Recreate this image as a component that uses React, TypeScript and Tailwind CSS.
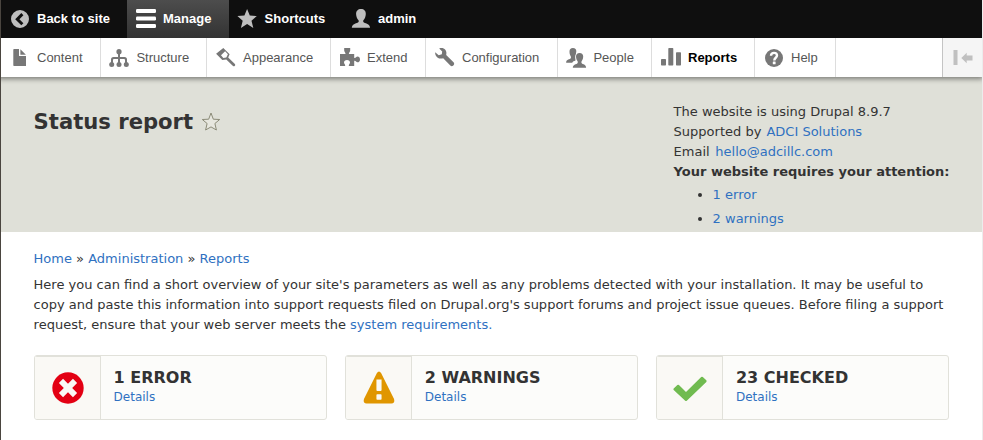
import type { ReactNode } from "react";

function Icon({ children, size = "size-5" }: { children: ReactNode; size?: string }) {
  return (
    <svg viewBox="0 0 20 20" fill="currentColor" className={`${size} shrink-0 overflow-visible`} aria-hidden="true">
      {children}
    </svg>
  );
}

const icons = {
  back: (
    <path
      fillRule="evenodd"
      d="M10 1a9 9 0 1 0 0 18a9 9 0 0 0 0-18ZM11.3 4.100L13.4 6.200L9.4 10.2L13.4 14.2L11.3 16.300L5.200 10.2Z"
    />
  ),
  menu: (
    <g>
      <rect x="0" y="0" width="20" height="4" rx="1.2" />
      <rect x="0" y="7.5" width="20" height="4" rx="1.2" />
      <rect x="0" y="15" width="20" height="4" rx="1.2" />
    </g>
  ),
  star: <path d="M9.1 0L11.8 6.6L18.8 7.1L13.5 11.8L15.3 18.9L9.1 15.1L2.9 18.9L4.7 11.8L-.6 7.1L6.4 6.6Z" />,
  person: (
    <path d="M10 0c3 0 5 2 4.8 5.1c-.1 2.6-.9 4.8-2.4 6.2c-.4.5-.3 1.8.5 2.2c2.7 1.3 5.8 1.6 6.2 5.2H.8c.4-3.6 3.500-3.900 6.200-5.200c.9-.4.9-1.700.500-2.200c-1.500-1.400-2.300-3.600-2.400-6.200C5 2 7 0 10 0Z" />
  ),
  file: (
    <g>
      <path d="M4 1H9V8H16V18H4Q3.300 18 3.300 17.300V1.700Q3.300 1 4 1Z" />
      <path d="M10.400 1.200L15.900 6.700H10.400Z" />
    </g>
  ),
  structure: (
    <g>
      <circle cx="10" cy="3.700" r="2.600" />
      <path d="M9 5h2v4h4.500q2.500 0 2.500 2.500V15h-2v-3q0-1-1-1h-4v4h-2v-4H5q-1 0-1 1v3H2v-3.500Q2 9 4.500 9H9Z" />
      <circle cx="2.700" cy="16.500" r="2.500" />
      <circle cx="10" cy="16.500" r="2.500" />
      <circle cx="17.300" cy="16.500" r="2.500" />
    </g>
  ),
  paint: (
    <path
      fillRule="evenodd"
      d="M7.300.1L13.600 6.300L12.200 9.500L18.900 15.900Q19.700 16.800 18.900 17.700Q17.900 18.700 17 17.900L10.300 11.400L6.300 12L.1 5.800ZM9.100 3.200L5 7.200L7.300 10.100L10.300 9.600L11.900 6.200Z"
    />
  ),
  puzzle: (
    <path d="M0 6H5.400C6 4.700 4.200 3.900 4.200 2.400V.1H10.200V2.400C10.200 3.900 8.300 4.800 9 6H14.200V9.700C15.400 10.700 16.100 8.500 17.500 8.500C19 8.500 20 9.700 20 11.400C20 13.100 19 14.300 17.500 14.300C16.100 14.300 15.400 12.100 14.200 13.100V18H8.900C8.300 16.800 10 16 10 14.500C10 13.100 8.900 12 7 12S4 13.100 4 14.500C4 16 5.700 16.800 5.100 18H0Z" />
  ),
  wrench: (
    <path d="M.2 4.200L3.700 7.300L6.800 6.300L7.200 3.500L4.200.4C6.500-.4 9 0 10.300 1.800C11.500 3.400 11.600 5.200 11.200 6.900L18.500 14.300C20.500 16.300 17.500 19.600 15.300 17.600L8.200 10.200C6.200 10.900 4 10.600 2.400 9.400C.6 8 0 6.200.2 4.200Z" />
  ),
  people: (
    <g>
      <path d="M6.900.1C9.300.1 10.400 1.600 10.300 3.600L9.300 9.500L9.500 12.500C8 13 6.700 13.500 6.200 14.700H.1C.2 12.200 1.500 12 3.800 11.100C5.200 10.400 5.200 9.200 4.700 8.200C3.800 6.900 3.500 5.400 3.500 3.600C3.500 1.600 4.600.1 6.900.1Z" />
      <path d="M13.600 4.900C15.900 4.900 17.300 6.300 17.200 8.600C17.100 10.700 16.500 12.100 15.600 13.300C15.200 14.300 15.500 15.300 16.200 15.700C18 16.600 20 16.600 20.100 19.800H6.800C7 16.600 9.200 16.600 11 15.700C11.700 15.300 12 14.300 11.600 13.300C10.700 12.100 10.100 10.700 10 8.600C9.900 6.300 11.300 4.900 13.600 4.900Z" stroke="white" strokeWidth="1.2" paintOrder="stroke" />
    </g>
  ),
  reports: (
    <g>
      <rect x="0" y="11" width="5" height="6.500" rx=".7" />
      <rect x="7.300" y="0" width="5" height="17.500" rx=".7" />
      <rect x="15" y="4.200" width="5" height="13.300" rx=".7" />
    </g>
  ),
  help: (
    <g>
      <circle cx="10" cy="10" r="9" />
      <path d="M7 7.800C7 5.800 8.200 4.900 10 4.900S13 5.900 13 7.500C13 9.800 10.300 9.700 10.300 12.400" fill="none" stroke="white" strokeWidth="2.400" />
      <rect x="8.800" y="13.500" width="2.800" height="2.700" rx=".5" fill="white" />
    </g>
  ),
};

const topItems = [
  { label: "Back to site", icon: icons.back, cls: "w-[126px] text-[#bebebe]" },
  { label: "Manage", icon: icons.menu, cls: "w-[102px] bg-linear-to-b from-[#4d4d4d] to-[#333333] text-white" },
  { label: "Shortcuts", icon: icons.star, cls: "w-[113.4px] -ml-[0.4px] text-[#bebebe]" },
  { label: "admin", icon: icons.person, cls: "w-[90px] text-[#bebebe]" },
];

const trayItems = [
  { label: "Content", icon: icons.file, cls: "w-[100px] pl-[9px] text-[#565656]" },
  { label: "Structure", icon: icons.structure, cls: "w-[106px] pl-[8.4px] text-[#565656]" },
  { label: "Appearance", icon: icons.paint, cls: "w-[124px] pl-[9px] text-[#565656]" },
  { label: "Extend", icon: icons.puzzle, cls: "w-[95px] pl-[9px] text-[#565656]" },
  { label: "Configuration", icon: icons.wrench, cls: "w-[132px] pl-[9px] text-[#565656]" },
  { label: "People", icon: icons.people, cls: "w-[94px] pl-[8.4px] text-[#565656]" },
  { label: "Reports", icon: icons.reports, cls: "w-[103px] pl-[9px] font-bold text-black" },
  { label: "Help", icon: icons.help, cls: "w-[81px] pl-[9px] text-[#565656]" },
];

const counters = [
  {
    title: "1 ERROR",
    color: "text-[#e30013]",
    icon: (
      <g>
        <circle cx="10" cy="10" r="9.800" />
        <path d="M5.600 5.600L14.400 14.400M14.400 5.600L5.600 14.400" stroke="#faf9f5" strokeWidth="3.700" strokeLinecap="butt" />
      </g>
    ),
  },
  {
    title: "2 WARNINGS",
    color: "text-[#e09600]",
    icon: (
      <path
        fillRule="evenodd"
        d="M8.700.700Q10-1.200 11.300.700L19.400 16.900Q20.200 19.600 17.700 19.700H2.300Q-.200 19.600.600 16.900ZM8.400 4.700V11.200Q8.400 11.800 9 11.800H11Q11.600 11.800 11.600 11.200V4.700ZM8.900 13.900Q8.400 13.900 8.400 14.400V16.800Q8.400 17.300 8.900 17.300H11.100Q11.600 17.300 11.600 16.800V14.400Q11.600 13.900 11.100 13.900Z"
      />
    ),
  },
  {
    title: "23 CHECKED",
    color: "text-[#70bb50]",
    icon: <path d="M-.200 10.300L2.100 8.100Q2.600 7.700 3.100 8.100L7.500 12.500L17 3.100Q17.500 2.700 18 3.100L20.200 5.200Q20.600 5.700 20.200 6.200L8 17.900Q7.500 18.300 7 17.900L-.200 11.200Q-.600 10.700-.200 10.300Z" />,
  },
];

function Link({ children }: { children: ReactNode }) {
  return <a href="#" className="text-[#2f71c1]">{children}</a>;
}

export default function App() {
  return (
    <div className="h-[440px] w-[983px] overflow-hidden border-l border-r border-l-[#4a453f] border-r-[#ececec] bg-white font-['DejaVu_Sans',sans-serif] text-[13px] leading-5 text-[#333333]">
      <header className="relative font-['Liberation_Sans',Arial,sans-serif]">
        <nav className="flex h-[38px] bg-[#0f0f0f] font-bold">
          {topItems.map((item) => (
            <a key={item.label} href="#" className={`flex h-full shrink-0 items-center gap-[7px] pl-[9px] ${item.cls}`}>
              <Icon>{item.icon}</Icon>
              <span className="whitespace-nowrap text-white">{item.label}</span>
            </a>
          ))}
        </nav>
        <nav className="flex h-[39px] bg-white shadow-[-1px_0_5px_2px_rgba(0,0,0,0.45)] [clip-path:inset(0_0_-8px_0)]">
          {trayItems.map((item) => (
            <a key={item.label} href="#" className={`flex h-full items-center gap-[7px] border-r border-[#dddddd] ${item.cls}`}>
              <span className="flex text-[#777777]"><Icon>{item.icon}</Icon></span>
              <span className="whitespace-nowrap">{item.label}</span>
            </a>
          ))}
          <button className="ml-auto flex w-10 items-center justify-center border-l border-[#c4c4c4] bg-[#f5f5f5] text-[#c0c0c0]" aria-label="Horizontal orientation">
            <Icon>
              <rect x="0.500" y="2" width="4" height="15" />
              <path d="M8.300 10L13.700 4.800V7.500H19.500V12.500H13.700V15.200Z" />
            </Icon>
          </button>
        </nav>
      </header>

      <section className="flex h-[155px] items-start justify-between bg-[#dfe0d8] pl-[32.6px] pr-[32.4px]">
        <div className="flex items-center gap-2 pt-[33px]">
          <h1 className="text-[21.14px] font-bold leading-6">Status report</h1>
          <svg viewBox="0 0 20 20" className="-mt-px size-5" fill="#e7e7df" stroke="#8b8b78" strokeWidth="1" strokeLinejoin="round">
            <path d="M10 1L12.300 7.200L18.700 7.500L13.900 11.500L15.400 18L10 14.900L4.600 18L6.100 11.500L1.300 7.500L7.700 7.200Z" />
          </svg>
        </div>
        <div className="w-[276px] whitespace-nowrap pt-[25px]">
          <p>The website is using Drupal 8.9.7</p>
          <p>Supported by <span className="ml-px"><Link>ADCI Solutions</Link></span></p>
          <p>Email <span className="ml-[1.500px]"><Link>hello@adcillc.com</Link></span></p>
          <p className="font-bold">Your website requires your attention:</p>
          <ul className="ml-[39px] mt-[3px] flex list-disc flex-col gap-1">
            <li><Link>1 error</Link></li>
            <li><Link>2 warnings</Link></li>
          </ul>
        </div>
      </section>

      <main className="pl-[32.6px] pt-[17px]">
        <nav><Link>Home</Link> » <Link>Administration</Link> » <Link>Reports</Link></nav>
        <p className="mt-1.5 whitespace-nowrap">
          Here you can find a short overview of your site's parameters as well as any problems detected with your installation. It may be useful to
          <br />
          copy and paste this information into support requests filed on Drupal.org's support forums and project issue queues. Before filing a support
          <br />
          request, ensure that your web server meets the <Link>system requirements.</Link>
        </p>
        <div className="mt-5 flex gap-[18.2px]">
          {counters.map((item) => (
            <article key={item.title} className="flex h-[65px] w-[293px] shrink-0 overflow-hidden rounded-[3px] border border-[#e1e1da] bg-[#fcfcfa]">
              <div className={`flex w-[66px] items-center justify-center border-r border-t border-[#e1e1da] bg-[#faf9f5] pl-px ${item.color}`}>
                <Icon size="size-8">{item.icon}</Icon>
              </div>
              <div className="pl-[13px] pt-3">
                <h2 className="text-base font-bold leading-[19px]">{item.title}</h2>
                <p className="mt-px text-xs leading-[19px]"><Link>Details</Link></p>
              </div>
            </article>
          ))}
        </div>
      </main>
    </div>
  );
}
